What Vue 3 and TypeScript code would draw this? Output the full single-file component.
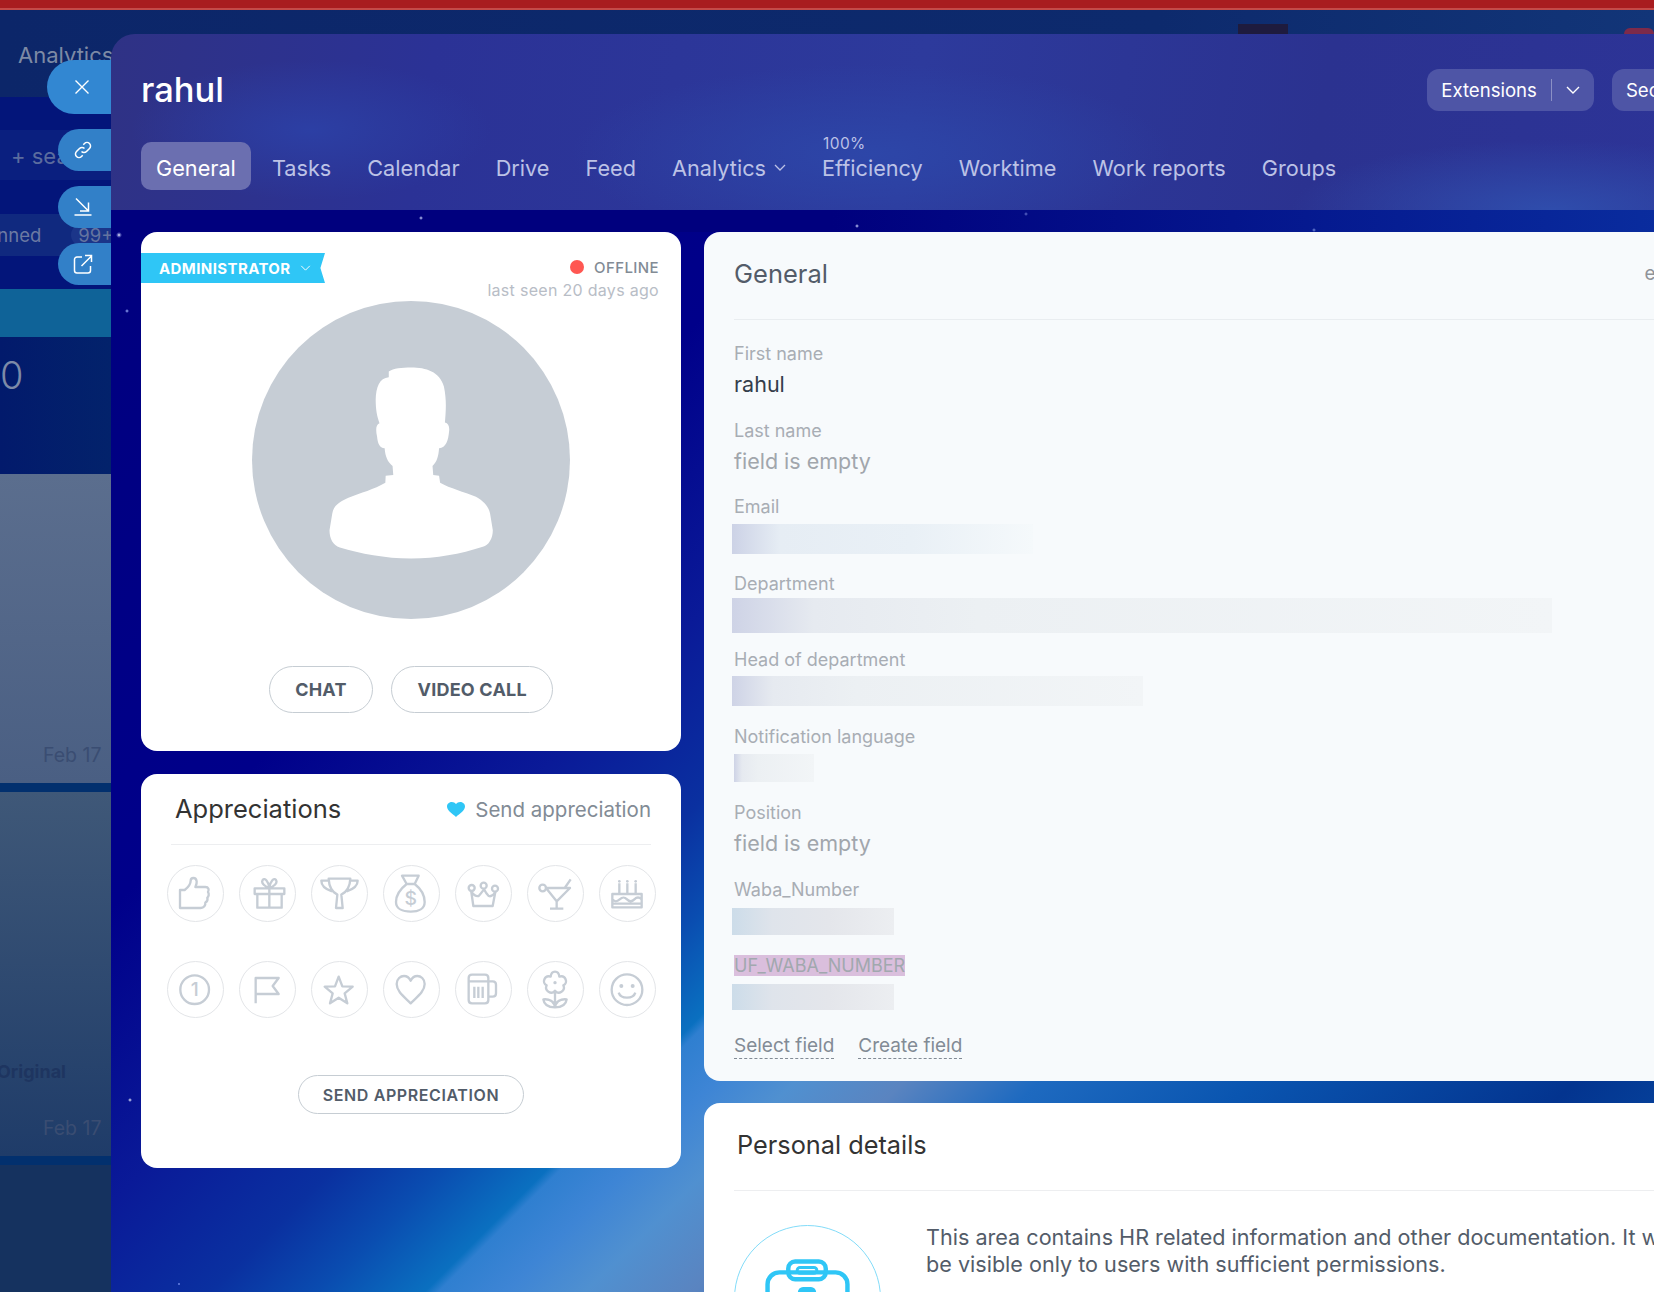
<script setup lang="ts">
interface Bar {
  w: number
  h: number
  top: number
  left?: number
  tint?: 'cool' | 'waba'
}

interface Field {
  label: string
  value?: string
  empty?: boolean
  mark?: boolean
  bar?: Bar
}

interface Badge {
  name: string
  d: string
  dots?: number[][]
  rings?: number[][]
  glyph?: string
}

const tabs = [
  { name: 'General', active: true },
  { name: 'Tasks' },
  { name: 'Calendar' },
  { name: 'Drive' },
  { name: 'Feed' },
  { name: 'Analytics', menu: true },
  { name: 'Efficiency', note: '100%' },
  { name: 'Worktime' },
  { name: 'Work reports' },
  { name: 'Groups' },
]

const fields: Field[] = [
  { label: 'First name', value: 'rahul' },
  { label: 'Last name', value: 'field is empty', empty: true },
  { label: 'Email', bar: { w: 301, h: 30, top: 4.5, tint: 'cool' } },
  { label: 'Department', bar: { w: 820, h: 35, top: 2.5 } },
  { label: 'Head of department', bar: { w: 411, h: 30, top: 4 } },
  { label: 'Notification language', bar: { w: 80, h: 28, top: 5.5, left: 0 } },
  { label: 'Position', value: 'field is empty', empty: true },
  { label: 'Waba_Number', bar: { w: 162, h: 27, top: 6, tint: 'waba' } },
  { label: 'UF_WABA_NUMBER', mark: true, bar: { w: 162, h: 26, top: 6, tint: 'waba' } },
]

const badges: Badge[] = [
  {
    name: 'thumb',
    d: 'M36 72H50C60 64 68 54 68 44C68 34 84 32 86 46C87 52 84 58 82 63H112C122 63 124 72 120 78C124 84 122 92 118 95C120 102 116 108 112 110C113 118 108 126 98 126H36Z',
  },
  {
    name: 'gift',
    d: 'M44 67H133V84H44ZM52 84V125H125V84M88 67V125M88 66C76 62 62 52 68 42C74 34 86 46 88 66C90 46 102 34 108 42C114 52 100 62 88 66',
  },
  {
    name: 'trophy',
    d: 'M50 38H115C114 62 104 78 88 86L92 126H72L76 86C60 78 51 62 50 38ZM50 44H28C28 62 42 70 60 76M115 44H137C137 62 122 70 104 76',
  },
  {
    name: 'money',
    d: 'M54 29H104L92 54C110 68 122 88 122 108C122 128 104 137 80 137C56 137 36 128 36 108C36 88 50 68 68 54ZM68 54H92',
    glyph: '$',
  },
  {
    name: 'crown',
    d: 'M52 120H110L118 78C112 88 104 92 98 90C92 84 88 78 84 70C78 78 74 84 68 90C60 92 54 88 46 78Z',
    rings: [[47, 66, 9], [83, 59, 9], [117, 68, 9]],
  },
  {
    name: 'cocktail',
    d: 'M54 66H126L86 106ZM86 106V128M66 128H106M110 66L128 40',
    rings: [[44, 66, 10]],
  },
  {
    name: 'cake',
    d: 'M37 84H125V124H37ZM37 100C45 108 50 108 59 100S73 92 81 100S95 108 103 100S117 92 125 100M37 113H125M58 52V84M82 52V84M107 52V84',
    dots: [[58, 46, 4], [82, 46, 4], [107, 46, 4]],
  },
  {
    name: 'first',
    d: '',
    rings: [[80, 83, 43]],
    glyph: '1',
  },
  { name: 'flag', d: 'M47 124V48H116L98 72L116 96H47' },
  {
    name: 'star',
    d: 'M80 44L91 73L122 74L98 94L106 124L80 107L54 124L62 94L38 74L69 73Z',
  },
  {
    name: 'heart',
    d: 'M80 124C60 104 38 88 38 66C38 50 50 42 60 42C70 42 76 48 80 56C84 48 90 42 100 42C110 42 122 50 122 66C122 88 100 104 80 124Z',
  },
  {
    name: 'beer',
    d: 'M48 38H87C93 38 97 42 97 48V114C97 120 93 124 87 124H48C42 124 38 120 38 114V48C38 42 42 38 48 38ZM38 58H97M55 74V108M67 74V108M80 74V108M97 58H110C117 58 120 62 120 68V94C120 100 116 104 110 104H97',
  },
  {
    name: 'flower',
    d: 'M68 44C70 24 92 24 94 44C112 38 122 62 106 70C114 86 92 100 81 86C70 100 48 86 56 70C40 62 50 38 68 44ZM81 92V136M81 136C60 136 48 128 46 112C64 110 78 118 81 136C84 118 98 110 116 112C114 128 102 136 81 136',
    dots: [[81, 62, 5]],
  },
  {
    name: 'smile',
    d: 'M56 92C62 112 100 112 106 92',
    rings: [[81, 83, 46]],
    dots: [[64, 72, 6], [98, 72, 6]],
  },
]
</script>

<template>
  <div class="page">
    <div class="red-bar"></div>

    <div class="behind">
      <div class="behind-top">
        <span class="top-block"></span>
        <span class="top-avatar"></span>
      </div>
      <div class="behind-strip">
        <div class="strip-title">Analytics</div>
        <div class="strip-gap"></div>
        <div class="strip-search">+ search</div>
        <div class="strip-gap tall"></div>
        <div class="strip-pinned"><span class="pinned-text">Pinned</span><span class="pinned-count">99+</span></div>
        <div class="strip-gap"></div>
        <div class="strip-teal"></div>
        <div class="strip-total">0</div>
        <div class="strip-post first">
          <span class="post-date">Feb 17</span>
        </div>
        <div class="strip-band"></div>
        <div class="strip-post second">
          <span class="post-author">Original</span>
          <span class="post-date">Feb 17</span>
        </div>
        <div class="strip-band"></div>
        <div class="strip-rest"></div>
      </div>
    </div>

    <div class="panel">
      <header class="panel-head">
        <div class="title-row">
          <h1 class="user-name">rahul</h1>
          <div class="head-actions">
            <button type="button" class="head-btn">
              Extensions
              <span class="btn-split"></span>
              <svg class="btn-chevron" viewBox="0 0 14 8" fill="none">
                <path d="M1 1l6 6 6-6" stroke="#fff" stroke-width="1.4" />
              </svg>
            </button>
            <button type="button" class="head-btn">Security</button>
          </div>
        </div>
        <nav class="tabs">
          <a v-for="tab in tabs" :key="tab.name" :class="['tab', { active: tab.active }]">
            <span v-if="tab.note" class="tab-note">{{ tab.note }}</span>
            {{ tab.name }}
            <svg v-if="tab.menu" class="tab-chevron" viewBox="0 0 12 7" fill="none">
              <path d="M1 1l5 5 5-5" stroke="#bcc2e6" stroke-width="1.3" />
            </svg>
          </a>
        </nav>
      </header>

      <div class="panel-body">
        <div class="col-left">
          <section class="card profile">
            <div class="profile-top">
              <div class="ribbon">
                ADMINISTRATOR
                <svg class="ribbon-chevron" viewBox="0 0 12 7" fill="none">
                  <path d="M1 1l5 5 5-5" stroke="#fff" stroke-width="1.1" />
                </svg>
              </div>
              <div class="status">
                <div class="status-line"><span class="status-dot"></span>OFFLINE</div>
                <div class="status-seen">last seen 20 days ago</div>
              </div>
            </div>
            <svg class="avatar" viewBox="325 214 923 952" preserveAspectRatio="none">
              <ellipse cx="786.500" cy="690" rx="461.500" ry="476" fill="#c6cdd5" />
              <path
                fill="#fff"
                d="M722 425C735 415 760 413 787 413C830 413 870 425 882 470C890 510 888 540 885 578C895 580 899 590 897 605C895 630 888 655 868 655C866 680 862 695 849 708L851 735L868 737L871 758C900 775 940 785 975 800C1000 815 1012 830 1016 850L1024 900C1024 925 1012 945 995 950C930 972 860 985 787 985C710 985 640 970 580 952C560 945 550 925 550 900L558 850C562 825 580 815 605 803C640 788 680 778 712 758L713 737L735 735L733 708C718 695 712 680 710 655C695 655 690 640 688 620C684 600 684 585 695 580C688 560 684 540 684 510C685 470 695 445 722 442Z"
              />
            </svg>
            <div class="profile-actions">
              <button type="button" class="pill">CHAT</button>
              <button type="button" class="pill">VIDEO CALL</button>
            </div>
          </section>

          <section class="card thanks">
            <div class="thanks-head">
              <h2 class="thanks-title">Appreciations</h2>
              <div class="thanks-send">
                <svg class="thanks-heart" viewBox="0 0 18 15">
                  <path fill="#2fc6f6" d="M9 15C6 12 0 9 0 4.500C0 1.500 2.500 0 4.800 0C6.500 0 8 .8 9 2C10 .8 11.500 0 13.200 0C15.500 0 18 1.500 18 4.500C18 9 12 12 9 15Z" />
                </svg>
                Send appreciation
              </div>
            </div>
            <div class="badge-grid">
              <div v-for="badge in badges" :key="badge.name" class="badge">
                <svg viewBox="0 0 165 165" fill="none" stroke="#c6cdd5" stroke-width="7" stroke-linejoin="round">
                  <path v-if="badge.d" :d="badge.d" />
                  <circle v-for="(r, i) in badge.rings" :key="i" :cx="r[0]" :cy="r[1]" :r="r[2]" />
                  <circle v-for="(r, i) in badge.dots" :key="i" :cx="r[0]" :cy="r[1]" :r="r[2]" fill="#c6cdd5" stroke="none" />
                  <text
                    v-if="badge.glyph"
                    class="badge-glyph"
                    x="80"
                    :y="badge.glyph === '$' ? 118 : 103"
                    text-anchor="middle"
                    fill="#c6cdd5"
                    stroke="none"
                  >{{ badge.glyph }}</text>
                </svg>
              </div>
            </div>
            <div class="thanks-foot">
              <button type="button" class="pill small">SEND APPRECIATION</button>
            </div>
          </section>
        </div>

        <div class="col-right">
          <section class="card general">
            <div class="general-head">
              <h2 class="general-title">General</h2>
              <span class="general-edit">edit</span>
            </div>
            <div class="field-list">
              <div v-for="field in fields" :key="field.label" class="field">
                <div class="field-label"><span :class="{ marked: field.mark }">{{ field.label }}</span></div>
                <div v-if="field.value" :class="['field-value', { empty: field.empty }]">{{ field.value }}</div>
                <div
                  v-if="field.bar"
                  :class="['field-bar', field.bar.tint]"
                  :style="{
                    width: field.bar.w + 'px',
                    height: field.bar.h + 'px',
                    marginTop: field.bar.top + 'px',
                    marginLeft: (field.bar.left ?? -2) + 'px',
                  }"
                ></div>
              </div>
            </div>
            <div class="field-links">
              <a class="dashed">Select field</a>
              <a class="dashed">Create field</a>
            </div>
          </section>

          <section class="card personal">
            <h2 class="personal-title">Personal details</h2>
            <div class="personal-row">
              <div class="case-circle">
                <svg viewBox="0 0 147 147" fill="none" stroke="#2fc6f6" stroke-width="4.500">
                  <rect x="54" y="36" width="38" height="18" rx="7" />
                  <rect x="63" y="42" width="20" height="6" rx="3" stroke-width="3" />
                  <rect x="33" y="47" width="81" height="60" rx="12" />
                  <rect x="66" y="64" width="14" height="8" rx="3" fill="#2fc6f6" />
                </svg>
              </div>
              <p class="personal-text">
                This area contains HR related information and other documentation. It will<br />
                be visible only to users with sufficient permissions.
              </p>
            </div>
          </section>
        </div>
      </div>
    </div>

    <button type="button" class="side-btn close">
      <svg viewBox="0 0 16 16" fill="none"><path d="M1.500 1.500l13 13m0-13l-13 13" stroke="#fff" stroke-width="1.400" /></svg>
    </button>
    <button type="button" class="side-btn link">
      <svg viewBox="0 0 20 20" fill="none" stroke="#fff" stroke-width="1.500">
        <path d="M8.500 11.500a3.500 3.500 0 005 0l3-3a3.500 3.500 0 00-5-5l-1.200 1.200" />
        <path d="M11.500 8.500a3.500 3.500 0 00-5 0l-3 3a3.500 3.500 0 005 5l1.200-1.200" />
      </svg>
    </button>
    <button type="button" class="side-btn download">
      <svg viewBox="0 0 20 20" fill="none" stroke="#fff" stroke-width="1.500">
        <path d="M3 1.500l12.500 12.500M15.500 5.500V14H7M1.500 18H18.500" />
      </svg>
    </button>
    <button type="button" class="side-btn open">
      <svg viewBox="0 0 20 20" fill="none" stroke="#fff" stroke-width="1.500">
        <path d="M9 3H4a2.500 2.500 0 00-2.500 2.500v11A2.500 2.500 0 004 19h11a2.500 2.500 0 002.500-2.500V12" />
        <path d="M8.500 12L18 2.500M12 1.500h6.500V8" />
      </svg>
    </button>
  </div>
</template>

<style scoped>
.page {
  position: relative;
  width: 1654px;
  height: 1292px;
  overflow: hidden;
  display: flex;
  flex-direction: column;
  font-family: Inter, "Liberation Sans", sans-serif;
  background: #0d2a6d;
}

.red-bar {
  height: 8px;
  background: #a81c1f;
  border-bottom: 2px solid #c44a48;
  flex-shrink: 0;
}

.behind {
  flex: 1;
  min-height: 0;
  background: linear-gradient(90deg, #0c2669 0%, #0d2a6d 70%, #123578 100%);
}

.behind-top {
  position: absolute;
  top: 10px;
  left: 0;
  right: 0;
  height: 24px;
  display: flex;
  align-items: flex-end;
}

.top-block {
  width: 59px;
  height: 10px;
  margin-left: 1238px;
  background: #1e1b3e;
}

.top-avatar {
  width: 36px;
  height: 6px;
  margin-left: 336px;
  border-radius: 18px 18px 0 0;
  background: #7d2a4a;
}

.behind-strip {
  width: 120px;
  display: flex;
  flex-direction: column;
  height: 100%;
}

.strip-title {
  height: 87px;
  padding: 30px 0 0 18px;
  box-sizing: border-box;
  font-size: 22px;
  line-height: 30px;
  color: #7d8aa5;
  white-space: nowrap;
}

.strip-gap {
  height: 33px;
  background: #03157a;
}

.strip-gap.tall {
  height: 34px;
}

.strip-search {
  height: 50px;
  padding: 1px 0 0 11px;
  box-sizing: border-box;
  font-size: 22px;
  line-height: 50px;
  color: #5b6c9e;
  background: #0a1f7f;
  white-space: nowrap;
}

.strip-pinned {
  height: 42px;
  display: flex;
  align-items: center;
  background: #10297f;
  font-size: 18.500px;
  color: #6c7aa3;
  white-space: nowrap;
}

.pinned-text {
  margin-left: -19px;
}

.pinned-count {
  margin-left: 30px;
  padding: 0 5px 0 7px;
  border-radius: 14px;
  background: #1b3589;
  color: #6474a0;
}

.strip-teal {
  height: 48px;
  background: #0f6398;
}

.strip-total {
  height: 137px;
  padding-top: 15px;
  box-sizing: border-box;
  font-size: 38px;
  line-height: 46px;
  font-weight: 300;
  color: #7d8aa8;
  background: linear-gradient(90deg, #021a6c, #03236b);
}

.strip-post {
  position: relative;
  flex-shrink: 0;
}

.strip-post.first {
  height: 309px;
  background: linear-gradient(180deg, #5b6e8e, #4a5f83);
}

.strip-post.second {
  height: 364px;
  background: linear-gradient(180deg, #3f5878, #1f3c69);
}

.post-date {
  position: absolute;
  left: 43px;
  bottom: 17px;
  font-size: 19.500px;
  line-height: 22px;
  color: #3a4d72;
  white-space: nowrap;
}

.post-author {
  position: absolute;
  left: -3px;
  bottom: 73px;
  font-size: 18px;
  line-height: 22px;
  font-weight: 700;
  color: #1e3560;
}

.strip-band {
  height: 9px;
  flex-shrink: 0;
  background: #02306e;
}

.strip-rest {
  flex: 1;
  background: #15325f;
}

.panel {
  position: absolute;
  top: 34px;
  left: 111px;
  width: 1602px;
  bottom: 0;
  display: flex;
  flex-direction: column;
  border-radius: 24px 0 0 0;
  overflow: hidden;
}

.panel-head {
  height: 176px;
  box-sizing: border-box;
  padding: 35px 0 0 30px;
  flex-shrink: 0;
  background:
    radial-gradient(ellipse 180px 70px at 200px 96px, #2c3fa4, transparent),
    radial-gradient(ellipse 300px 90px at 760px 120px, #2d46a8, transparent),
    radial-gradient(ellipse 260px 70px at 1440px 176px, #2f4dac, transparent),
    linear-gradient(100deg, #2f3285 0%, #2b3296 20%, #2d3a9c 50%, #2b3290 75%, #2d3498 100%);
}

.title-row {
  display: flex;
  align-items: center;
  justify-content: space-between;
  height: 42px;
}

.user-name {
  margin: 0;
  font-size: 34.500px;
  line-height: 42px;
  font-weight: 500;
  color: #fff;
}

.head-actions {
  display: flex;
  gap: 18px;
}

.head-btn {
  display: flex;
  align-items: center;
  height: 42px;
  padding: 0 14px;
  border: none;
  border-radius: 12px;
  background: #4e55a6;
  color: #fff;
  font-family: inherit;
  font-size: 18.600px;
  white-space: nowrap;
}

.btn-split {
  width: 1px;
  height: 22px;
  margin: 0 14px;
  background: rgba(255, 255, 255, 0.35);
}

.btn-chevron {
  width: 14px;
  height: 8px;
}

.tabs {
  display: flex;
  gap: 6px;
  margin-top: 31px;
}

.tab {
  position: relative;
  display: flex;
  align-items: center;
  height: 48px;
  box-sizing: border-box;
  padding: 3px 15px 0;
  border-radius: 10px;
  font-size: 21.700px;
  color: #bcc2e6;
  white-space: nowrap;
}

.tab.active {
  background: #6b6fb0;
  color: #fff;
}

.tab-note {
  position: absolute;
  left: 16px;
  top: -7px;
  font-size: 15.500px;
  line-height: 18px;
  letter-spacing: 0.4px;
}

.tab-chevron {
  width: 12px;
  height: 7px;
  margin-left: 8px;
}

.panel-body {
  flex: 1;
  min-height: 0;
  display: flex;
  gap: 23px;
  padding: 22px 0 0 30px;
  background:
    radial-gradient(circle 3px at 8px 25px, #fff, rgba(190, 200, 255, 0.5) 45%, transparent),
    radial-gradient(circle 2px at 16px 101px, #a0b4ff, transparent),
    radial-gradient(circle 2px at 310px 8px, #cfd8ff, transparent),
    radial-gradient(circle 2px at 746px 16px, #cfd8ff, transparent),
    radial-gradient(circle 2px at 915px 4px, rgba(168, 184, 255, 0.6), transparent),
    radial-gradient(circle 2px at 1203px 20px, rgba(168, 192, 255, 0.7), transparent),
    radial-gradient(circle 2px at 19px 890px, #e8ecff, transparent),
    radial-gradient(circle 1.500px at 68px 1074px, #8ea4ff, transparent),
    linear-gradient(90deg, #00007e 0%, #00007e 45%, #04158c 70%, #0a2fa0 100%) top / 100% 22px no-repeat,
    linear-gradient(135deg, #00007e 0%, #00008a 26%, #0a1a98 37%, #0a30a0 44%, #0a4cb0 48%, #0a70c0 52%, #2f7fd0 52.500%, #3e85d5 55%, #5090d0 58%, #5a84c0 62%, #1e6ac0 67%, #0a55b0 75%, #03348f 87%, #0a58b0 100%);
}

.col-left {
  width: 540px;
  flex-shrink: 0;
  display: flex;
  flex-direction: column;
  gap: 23px;
  align-self: flex-start;
}

.col-right {
  flex: 1;
  min-width: 0;
  display: flex;
  flex-direction: column;
  gap: 22px;
}

.card {
  background: #fff;
  border-radius: 16px;
  box-sizing: border-box;
  flex-shrink: 0;
}

.profile {
  height: 519px;
  padding-top: 21px;
}

.profile-top {
  display: flex;
  justify-content: space-between;
  height: 48px;
}

.ribbon {
  display: flex;
  align-items: center;
  width: 184px;
  height: 30px;
  box-sizing: border-box;
  padding-left: 18px;
  background: #2fc6f6;
  clip-path: polygon(0 0, 100% 0, 97.500% 50%, 100% 100%, 0 100%);
  color: #fff;
  font-size: 15px;
  font-weight: 700;
  letter-spacing: 0.4px;
  white-space: nowrap;
}

.ribbon-chevron {
  width: 11px;
  height: 6px;
  margin-left: 9px;
}

.status {
  margin: 2px 22px 0 0;
  text-align: right;
}

.status-line {
  display: flex;
  align-items: center;
  justify-content: flex-end;
  height: 24px;
  font-size: 15px;
  font-weight: 500;
  letter-spacing: 0.4px;
  color: #828b95;
}

.status-dot {
  width: 14px;
  height: 14px;
  margin-right: 10px;
  border-radius: 50%;
  background: #ff5752;
}

.status-seen {
  font-size: 16px;
  line-height: 22px;
  letter-spacing: 0.3px;
  color: #b8bdc6;
}

.avatar {
  display: block;
  width: 318px;
  height: 318px;
  margin: 0 auto;
}

.profile-actions {
  display: flex;
  justify-content: center;
  gap: 18px;
  margin-top: 47px;
}

.pill {
  height: 47px;
  padding: 0 25.500px;
  border: 1px solid #c6cdd3;
  border-radius: 24px;
  background: #fff;
  color: #525c69;
  font-family: inherit;
  font-size: 18px;
  font-weight: 700;
  letter-spacing: 0.2px;
  white-space: nowrap;
}

.pill.small {
  height: 39px;
  padding: 0 24px;
  font-size: 16px;
  font-weight: 600;
  letter-spacing: 0.6px;
}

.thanks {
  height: 394px;
}

.thanks-head {
  display: flex;
  align-items: center;
  justify-content: space-between;
  height: 71px;
  box-sizing: border-box;
  margin: 0 30px;
  padding: 0 0 0 4px;
  border-bottom: 1px solid #edeef0;
}

.thanks-title {
  margin: 0;
  font-size: 25.500px;
  line-height: 34px;
  font-weight: 400;
  color: #333;
}

.thanks-send {
  display: flex;
  align-items: center;
  gap: 10px;
  font-size: 20.500px;
  color: #828b95;
}

.thanks-heart {
  width: 18px;
  height: 15px;
}

.badge-grid {
  display: grid;
  grid-template-columns: repeat(7, 57px);
  column-gap: 15px;
  row-gap: 39px;
  padding: 20px 0 0 26px;
}

.badge {
  width: 57px;
  height: 57px;
  box-sizing: border-box;
  border: 1px solid #e3e5e8;
  border-radius: 50%;
}

.badge svg {
  display: block;
  width: 55px;
  height: 55px;
}

.badge-glyph {
  font-size: 58px;
  font-weight: 500;
  font-family: Inter, "Liberation Sans", sans-serif;
}

.thanks-foot {
  display: flex;
  justify-content: center;
  margin-top: 57px;
}

.general {
  height: 849px;
  background: #f7fafc;
}

.general-head {
  display: flex;
  align-items: center;
  justify-content: space-between;
  height: 88px;
  box-sizing: border-box;
  margin-left: 30px;
  padding: 0 35px 4px 0;
  border-bottom: 1px solid #e9edf0;
}

.general-title {
  margin: 0;
  font-size: 25.500px;
  line-height: 34px;
  font-weight: 400;
  color: #535c69;
}

.general-edit {
  font-size: 19px;
  color: #8f9399;
}

.field-list {
  padding: 22px 0 0 30px;
}

.field {
  height: 76.500px;
}

.field-label {
  font-size: 18px;
  line-height: 24px;
  color: #a8adb4;
}

.marked {
  display: inline-block;
  line-height: 21px;
  background: #dabfdd;
  color: #a1a8ae;
}

.field-value {
  margin-top: 5px;
  font-size: 21.500px;
  line-height: 26px;
  color: #333d4b;
}

.field-value.empty {
  color: #a1a6ac;
}

.field-bar {
  background: linear-gradient(90deg, #ced3e6 0%, #e6eaf0 10%, #ecf0f3 30%, #f2f5f7 100%);
}

.field-bar.cool {
  background: linear-gradient(90deg, #ccd2e6 0%, #e6edf4 16%, #e9f0f6 60%, #f5f9fb 100%);
}

.field-bar.waba {
  background: linear-gradient(90deg, #ccdce9 0%, #dfe4eb 25%, #e4e6eb 60%, #eceef1 100%);
}

.field-links {
  display: flex;
  gap: 24px;
  margin: 3px 0 0 30px;
}

.dashed {
  font-size: 19px;
  line-height: 24px;
  color: #828b95;
  border-bottom: 1px dashed #828b95;
}

.personal {
  height: 300px;
  border-radius: 16px 16px 0 0;
}

.personal-title {
  height: 88px;
  box-sizing: border-box;
  margin: 0 0 0 30px;
  padding: 25px 0 0 3px;
  border-bottom: 1px solid #edeef0;
  font-size: 25.300px;
  line-height: 34px;
  font-weight: 400;
  color: #333;
}

.personal-row {
  display: flex;
  gap: 45px;
  padding: 34px 0 0 30px;
}

.case-circle {
  width: 147px;
  height: 147px;
  flex-shrink: 0;
  box-sizing: border-box;
  border: 1px solid #83dcf9;
  border-radius: 50%;
}

.case-circle svg {
  display: block;
  width: 145px;
  height: 145px;
}

.personal-text {
  margin: -1px 0 0;
  font-size: 21.600px;
  line-height: 27px;
  color: #535c69;
  white-space: nowrap;
}

.side-btn {
  position: absolute;
  right: calc(100% - 111px);
  display: flex;
  align-items: center;
  justify-content: center;
  padding: 0;
  border: none;
  background: #3280c8;
}

.side-btn.close {
  top: 60px;
  width: 64px;
  height: 54px;
  padding-left: 6px;
  border-radius: 27px 0 0 27px;
  background: #3287d2;
}

.side-btn.close svg {
  width: 16px;
  height: 16px;
}

.side-btn.link {
  top: 129px;
}

.side-btn.download {
  top: 186px;
}

.side-btn.open {
  top: 243px;
}

.side-btn.link,
.side-btn.download,
.side-btn.open {
  width: 53px;
  height: 42px;
  padding-right: 3px;
  border-radius: 21px 0 0 21px;
}

.side-btn.link svg,
.side-btn.download svg,
.side-btn.open svg {
  width: 20px;
  height: 20px;
}
</style>
